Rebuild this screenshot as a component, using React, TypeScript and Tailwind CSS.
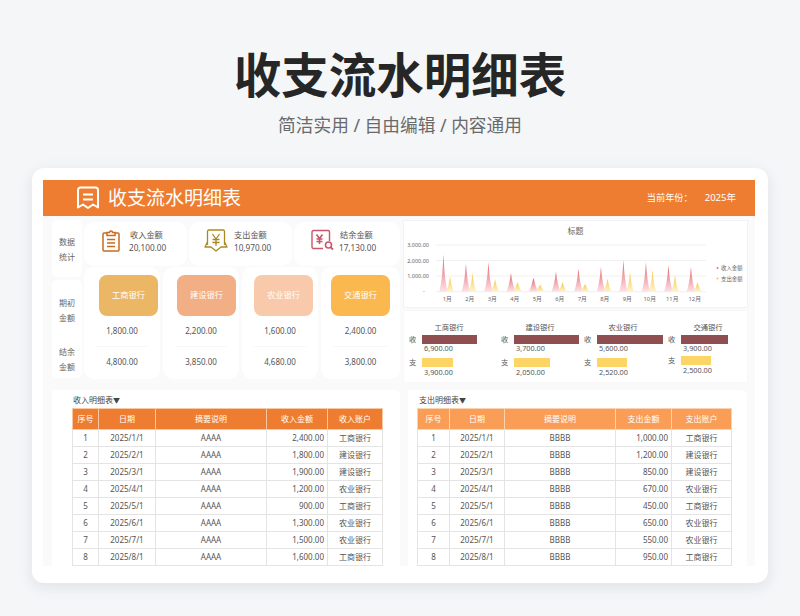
import React from "react";

const income = [
  ["2025/1/1", "2,400.00", "工商银行"],
  ["2025/2/1", "1,800.00", "建设银行"],
  ["2025/3/1", "1,900.00", "建设银行"],
  ["2025/4/1", "1,200.00", "农业银行"],
  ["2025/5/1", "900.00", "工商银行"],
  ["2025/6/1", "1,300.00", "农业银行"],
  ["2025/7/1", "1,500.00", "农业银行"],
  ["2025/8/1", "1,600.00", "工商银行"],
];
const expense = [
  ["2025/1/1", "1,000.00", "工商银行"],
  ["2025/2/1", "1,200.00", "建设银行"],
  ["2025/3/1", "850.00", "建设银行"],
  ["2025/4/1", "670.00", "农业银行"],
  ["2025/5/1", "450.00", "工商银行"],
  ["2025/6/1", "650.00", "农业银行"],
  ["2025/7/1", "550.00", "农业银行"],
  ["2025/8/1", "950.00", "工商银行"],
];

const redPeaks = [2400, 1800, 1900, 1200, 900, 1300, 1500, 1600, 2050, 1900, 1700, 1600];
const yellowPeaks = [1000, 1200, 800, 620, 450, 620, 500, 850, 1250, 1400, 1100, 600];

function ReceiptIcon() {
  return (
    <svg width="24" height="24" viewBox="0 0 24 24" fill="none" stroke="#fff" strokeWidth="2" strokeLinejoin="round" className="shrink-0">
      <path d="M2 21.5V4a2.5 2.5 0 0 1 2.5-2.5h15A2.5 2.5 0 0 1 22 4v17.5l-5-3-5 3.5-5-3.5z" />
      <path d="M7 8.5h10M7 13.5h10" />
    </svg>
  );
}
function ClipIcon() {
  return (
    <svg width="18" height="23" viewBox="0 0 18 23" fill="none" stroke="#c96c20" strokeWidth="1.5" className="shrink-0">
      <path d="M5 4H2a1 1 0 0 0-1 1v16a1 1 0 0 0 1 1h14a1 1 0 0 0 1-1V5a1 1 0 0 0-1-1h-3" />
      <path d="M5 6.5V3.5h2.5a1.5 1.5 0 0 1 3 0H13v3z" />
      <path d="M5 10.5h8M5 14h8M5 17.5h8" />
    </svg>
  );
}
function YenBannerIcon() {
  return (
    <svg width="24" height="23" viewBox="0 0 24 23" fill="none" stroke="#a98a22" strokeWidth="1.3" strokeLinejoin="round" className="shrink-0">
      <path d="M3.5 16V2.5A1.5 1.5 0 0 1 5 1h14a1.5 1.5 0 0 1 1.5 1.5V16" />
      <path d="M3.5 13L1 18h6l5 4 5-4h6l-2.5-5" />
      <path d="M8.5 5l3.5 5 3.5-5M12 10v7M8.5 10.5h7M8.5 13.5h7" />
    </svg>
  );
}
function YenSearchIcon() {
  return (
    <svg width="23" height="22" viewBox="0 0 23 22" fill="none" stroke="#c9566a" strokeWidth="1.4" strokeLinejoin="round" className="shrink-0">
      <path d="M12 19.5H2.5A1.5 1.5 0 0 1 1 18V3a1.5 1.5 0 0 1 1.5-1.5H17A1.5 1.5 0 0 1 18.5 3v9" />
      <path d="M5.5 5.5l3 4 3-4M8.5 9.5V15M5.5 10h6M5.5 12.5h6" strokeWidth="1.6" />
      <circle cx="17.5" cy="16" r="3" strokeWidth="1.6" />
      <path d="M19.8 18.3L22 20.5" strokeWidth="1.8" />
    </svg>
  );
}

function Chart() {
  const base = 71.7;
  const scale = 15.5 / 1000;
  const cat = (i: number) => 33 + 22.5 * (i + 0.5);
  return (
    <svg width="345" height="88" viewBox="0 0 345 88" className="block">
      <defs>
        <linearGradient id="red" x1="0" y1="0" x2="0" y2="1">
          <stop offset="0" stopColor="#e4606e" />
          <stop offset="1" stopColor="#fde3e5" />
        </linearGradient>
        <linearGradient id="yellow" x1="0" y1="0" x2="0" y2="1">
          <stop offset="0" stopColor="#f8c63f" />
          <stop offset="1" stopColor="#fef4d2" />
        </linearGradient>
      </defs>
      <text x="172.5" y="14" fontSize="8" fill="#666" textAnchor="middle">标题</text>
      {[25, 40.5, 56, 71.7].map((y) => (
        <line key={y} x1="33" x2="303" y1={y} y2={y} stroke="#f0f0f0" strokeWidth="1" />
      ))}
      {[["3,000.00", 27], ["2,000.00", 42.5], ["1,000.00", 58]].map(([t, y]) => (
        <text key={t as string} x="26" y={y as number} fontSize="5.5" fill="#666" textAnchor="end">{t}</text>
      ))}
      <text x="21" y="73" fontSize="5.5" fill="#666" textAnchor="middle">-</text>
      {redPeaks.map((v, i) => {
        const x = cat(i) - 3.8;
        return <path key={i} d={`M${x - 4.5} ${base}Q${x - 1.5} ${base - 7} ${x} ${base - v * scale}Q${x + 1.5} ${base - 7} ${x + 4.5} ${base}Z`} fill="url(#red)" />;
      })}
      {yellowPeaks.map((v, i) => {
        const x = cat(i) + 2.8;
        return <path key={i} d={`M${x - 4} ${base}Q${x - 1.3} ${base - 5} ${x} ${base - v * scale}Q${x + 1.3} ${base - 5} ${x + 4} ${base}Z`} fill="url(#yellow)" />;
      })}
      {Array.from({ length: 12 }).map((_, i) => (
        <text key={i} x={cat(i)} y="81" fontSize="5.8" fill="#666" textAnchor="middle">{i + 1}月</text>
      ))}
      <circle cx="314.5" cy="48" r="1" fill="#e8737f" />
      <text x="318" y="50" fontSize="5.4" fill="#666">收入金额</text>
      <circle cx="314.5" cy="58.5" r="1" fill="#f8c63f" />
      <text x="318" y="60.5" fontSize="5.4" fill="#666">支出金额</text>
    </svg>
  );
}

const bars = [
  { name: "工商银行", inc: 55, incV: "6,900.00", exp: 31, expV: "3,900.00", w: "w-[92px]", shift: "mt-[2px]", title: "ml-[9px]" },
  { name: "建设银行", inc: 65, incV: "3,700.00", exp: 36, expV: "2,050.00", w: "w-[83px]", shift: "mt-[2px]", title: "ml-[8px]" },
  { name: "农业银行", inc: 66, incV: "5,600.00", exp: 30, expV: "2,520.00", w: "w-[84px]", shift: "mt-[2px]", title: "ml-[8px]" },
  { name: "交通银行", inc: 47, incV: "3,900.00", exp: 30, expV: "2,500.00", w: "w-[74px]", shift: "mt-0", title: "ml-[9px]" },
];

function BankBars() {
  return (
    <div className="flex h-[73px] border border-[#f8f8f8] bg-white pt-[10px] pl-[4px] text-[7.3px] leading-[12px] text-[#555]">
      {bars.map((b) => (
        <div key={b.name} className={`${b.w} shrink-0`}>
          <div className={`${b.title} w-[64px] text-center`}>{b.name}</div>
          <div className="flex items-center">
            <span className="w-[14px] shrink-0 pl-[1px]">收</span>
            <div className="h-[9px] bg-[#8f4f51]" style={{ width: b.inc }} />
          </div>
          <div className="-mt-[3px] pl-[16px]">{b.incV}</div>
          <div className={`flex items-center ${b.shift}`}>
            <span className="w-[14px] shrink-0 pl-[1px]">支</span>
            <div className="h-[9px] bg-[#fdd566]" style={{ width: b.exp }} />
          </div>
          <div className="-mt-[2px] pl-[16px]">{b.expV}</div>
        </div>
      ))}
    </div>
  );
}

const banks = [
  { name: "工商银行", start: "1,800.00", end: "4,800.00", tile: "bg-[#ecb765]", w: "w-[76px]", pad: "ml-[15px]" },
  { name: "建设银行", start: "2,200.00", end: "3,850.00", tile: "bg-[#f2ae84]", w: "w-[76px]", pad: "ml-[14px]" },
  { name: "农业银行", start: "1,600.00", end: "4,680.00", tile: "bg-[#f8c9aa]", w: "w-[76px]", pad: "ml-[12px]" },
  { name: "交通银行", start: "2,400.00", end: "3,800.00", tile: "bg-[#fbb84f]", w: "w-[79px]", pad: "ml-[10px]" },
];

function DetailTable({
  rows,
  desc,
  amount,
  account,
  head,
  border,
  widths,
}: {
  rows: string[][];
  desc: string;
  amount: string;
  account: string;
  head: string;
  border: string;
  widths: number[];
}) {
  const heads = ["序号", "日期", "摘要说明", amount, account];
  return (
    <table className="table-fixed border-collapse text-[8px] text-[#555]">
      <colgroup>
        {widths.map((w, i) => (
          <col key={i} style={{ width: w }} />
        ))}
      </colgroup>
      <thead>
        <tr className="h-[21px]">
          {heads.map((h) => (
            <th key={h} className={`${head} border ${border} p-0 text-center font-normal text-white`}>{h}</th>
          ))}
        </tr>
      </thead>
      <tbody>
        {rows.map((r, i) => (
          <tr key={i} className="h-[17px]">
            <td className="border border-[#e4e4e4] p-0 text-center">{i + 1}</td>
            <td className="border border-[#e4e4e4] p-0 text-center">{r[0]}</td>
            <td className="border border-[#e4e4e4] p-0 pb-[1px] text-center">{desc}</td>
            <td className="border border-[#e4e4e4] p-0 pr-[3px] text-right">{r[1]}</td>
            <td className="border border-[#e4e4e4] p-0 text-center">{r[2]}</td>
          </tr>
        ))}
      </tbody>
    </table>
  );
}

export default function App() {
  return (
    <div className="flex h-[616px] w-[800px] flex-col overflow-hidden bg-[#f4f6f8] font-['Noto_Sans','Noto_Sans_CJK_SC',sans-serif]">
      <h1 className="mt-[40px] h-[70px] text-center text-[47.5px] leading-[70px] font-bold text-[#262626]">收支流水明细表</h1>
      <p className="mt-[3px] h-[24px] text-center text-[17.7px] leading-[24px] text-[#6a6a6a]">简洁实用 / 自由编辑 / 内容通用</p>
      <div className="mx-[32px] mt-[31px] h-[415px] w-[736px] rounded-[12px] bg-white pt-[12px] pr-[13px] pl-[11px] shadow-[0_4px_14px_rgba(150,160,170,0.22)]">
        <header className="flex h-[36px] items-center bg-[#ee7d31] pr-[19px] pl-[33px] text-white">
          <ReceiptIcon />
          <span className="ml-[8px] text-[19px] leading-[36px]">收支流水明细表</span>
          <span className="ml-auto text-[9.2px] leading-[36px]">当前年份：</span>
          <span className="ml-[12px] text-[9.5px] leading-[36px]">2025年</span>
        </header>
        <div className="h-[350px] bg-[#fafafa] pt-[4px] pl-[9px]">
          <div className="flex h-[163px]">
            <div className="flex w-[348px] shrink-0 gap-[2px]">
              <div className="flex w-[30px] shrink-0 flex-col gap-[3px] text-[8px] text-[#666]">
                <div className="flex h-[57px] flex-col items-center justify-center rounded-[5px] bg-white leading-[15px]">
                  <span>数据</span>
                  <span>统计</span>
                </div>
                <div className="flex h-[98px] flex-col items-center rounded-[5px] bg-white pt-[15px] leading-[15px]">
                  <span>期初</span>
                  <span>金额</span>
                  <span className="mt-[19px]">结余</span>
                  <span>金额</span>
                </div>
              </div>
              <div className="pt-[2px]">
                <div className="flex h-[44px] gap-[2px] text-[8.2px] leading-[13px] text-[#555]">
                  <div className="flex w-[103px] items-center gap-[9px] rounded-[10px] bg-white pb-[8px] pl-[18px]">
                    <ClipIcon />
                    <div className="pt-[1px]">
                      <div className="pl-[1px]">收入金额</div>
                      <div>20,100.00</div>
                    </div>
                  </div>
                  <div className="flex w-[103px] items-center gap-[6px] rounded-[10px] bg-white pb-[8px] pl-[15px]">
                    <YenBannerIcon />
                    <div className="pt-[1px]">
                      <div>支出金额</div>
                      <div>10,970.00</div>
                    </div>
                  </div>
                  <div className="flex w-[106px] items-center gap-[5px] rounded-[10px] bg-white pb-[8px] pl-[17px]">
                    <YenSearchIcon />
                    <div className="pt-[1px]">
                      <div className="pl-[1px]">结余金额</div>
                      <div>17,130.00</div>
                    </div>
                  </div>
                </div>
                <div className="mt-[1px] flex h-[112px] gap-[3px]">
                  {banks.map((b) => (
                    <div key={b.name} className={`${b.w} rounded-[10px] bg-white pt-[8px] text-[8px] text-[#555]`}>
                      <div className={`${b.pad} flex h-[41px] w-[59px] items-center justify-center rounded-[8px] text-[8.2px] text-white ${b.tile}`}>{b.name}</div>
                      <div className="mt-[3px] h-[23px] text-center leading-[23px]">{b.start}</div>
                      <div className="mx-[12px] mt-[4px] border-t border-[#f7f7f7]" />
                      <div className="mt-[3px] h-[24px] text-center leading-[24px]">{b.end}</div>
                    </div>
                  ))}
                </div>
              </div>
            </div>
            <div className="ml-[3px] w-[345px] shrink-0">
              <div className="h-[88px] border border-[#f2f2f2] bg-white">
                <div className="-m-px">
                  <Chart />
                </div>
              </div>
              <div className="mt-[2px]">
                <BankBars />
              </div>
            </div>
          </div>
          <div className="mt-[7px] flex h-[176px] gap-[8px]">
            <div className="h-[176px] w-[348px] shrink-0 rounded-tr-[6px] bg-white pl-[20px]">
              <div className="h-[18px] pl-[1px] text-[8px] leading-[20px] text-[#444]">收入明细表<span className="text-[7px]">▼</span></div>
              <DetailTable rows={income} desc="AAAA" amount="收入金额" account="收入账户" head="bg-[#ee7d31]" border="border-[#f8c8a0]" widths={[26, 57, 111, 61, 55]} />
            </div>
            <div className="h-[176px] w-[339px] shrink-0 rounded-tr-[6px] bg-white pl-[9px]">
              <div className="h-[18px] pl-[2px] text-[8px] leading-[20px] text-[#444]">支出明细表<span className="text-[7px]">▼</span></div>
              <DetailTable rows={expense} desc="BBBB" amount="支出金额" account="支出账户" head="bg-[#fa9d56]" border="border-[#fcd3b0]" widths={[32, 55, 111, 56, 60]} />
            </div>
          </div>
        </div>
      </div>
    </div>
  );
}
